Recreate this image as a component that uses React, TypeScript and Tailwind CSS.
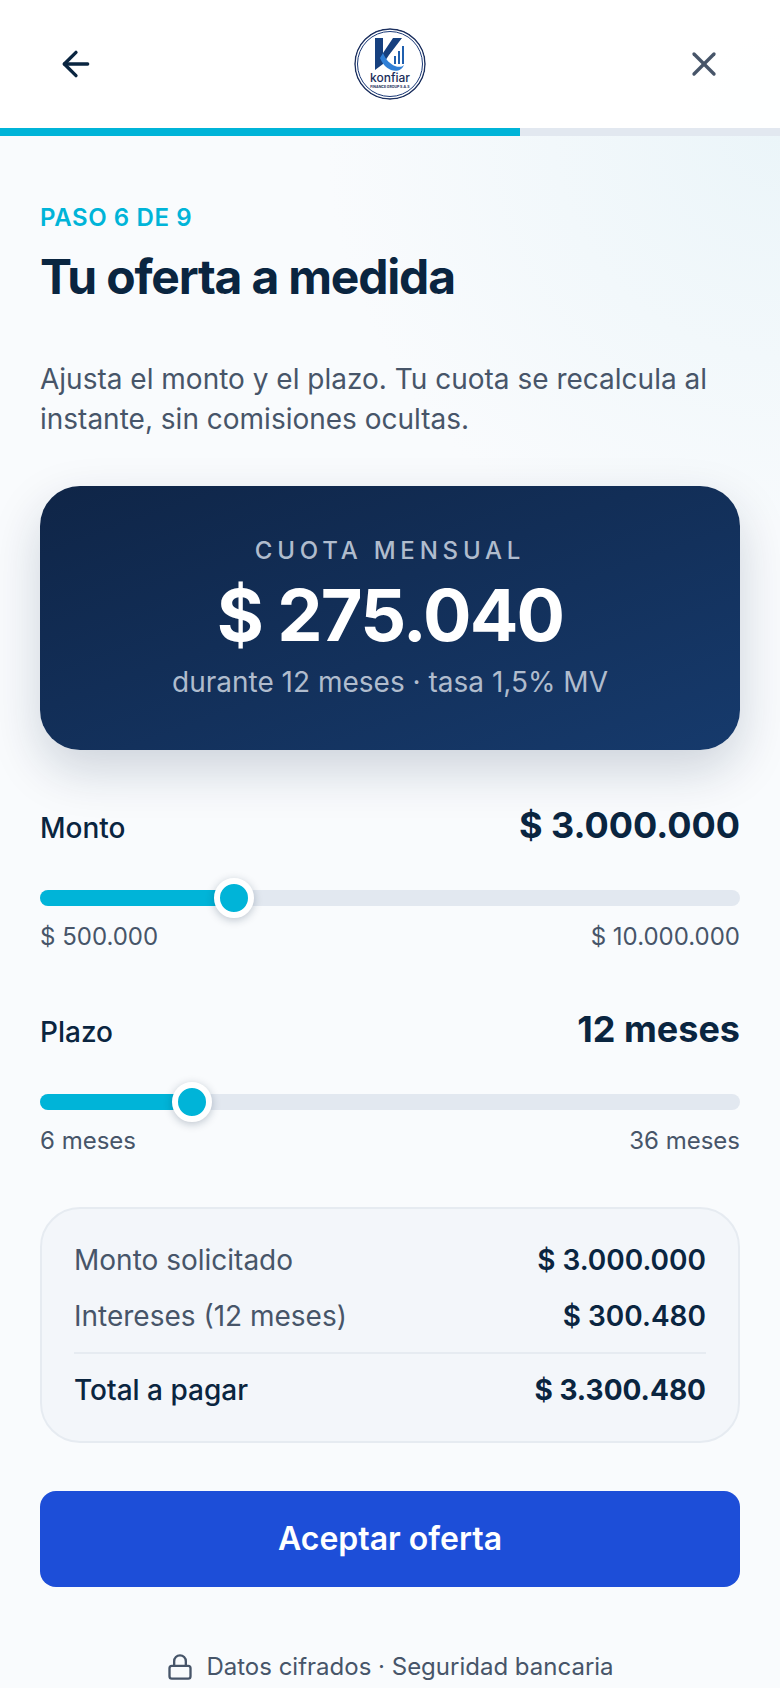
import { ArrowLeft, Lock, X } from "lucide-react";

function Logo() {
  return (
    <svg width="72" height="72" viewBox="0 0 72 72" className="rounded-full bg-white">
      <circle cx="36" cy="36" r="35" fill="none" stroke="#1b2f5e" strokeWidth="1.4" />
      <circle cx="36" cy="36" r="32.5" fill="none" stroke="#1b3a78" strokeWidth="1" />
      <path d="M21 10h8v15l10-15h9L35 27l-6 9-8 6z" fill="#16407f" />
      <path d="M29 25c3 7 7 11 12 13 4 1.500 7 1 9-1-2 5-7 7-13 5-5-2-9-7-11-12z" fill="#2f7fd6" />
      <path d="M40 28h2v8h-2zM44 23h2v13h-2zM48 18h2v18h-2z" fill="#1f5fae" />
      <text x="36" y="54" textAnchor="middle" fontSize="12" fontWeight="500" fill="#1a2d5a" fontFamily="Inter, sans-serif">
        konfiar
      </text>
      <text x="36" y="60" textAnchor="middle" fontSize="3.500" fontWeight="700" fill="#1a2d5a" fontFamily="Inter, sans-serif">
        FINANCE GROUP S.A.S
      </text>
    </svg>
  );
}

function Slider({
  label,
  value,
  min,
  max,
  minLabel,
  maxLabel,
  current,
}: {
  label: string;
  value: string;
  min: number;
  max: number;
  minLabel: string;
  maxLabel: string;
  current: number;
}) {
  // same thumb travel as a native range input: thumb stays inside the track
  const left = 20 + ((current - min) / (max - min)) * 660;
  return (
    <div>
      <div className="flex h-[44px] items-baseline justify-between">
        <span className="text-[28px] leading-[44px] font-medium text-[#0a2540]">{label}</span>
        <span className="text-[36px] leading-[44px] font-bold text-[#0a2540]">{value}</span>
      </div>
      <div className="relative mt-[43px] h-4 rounded-full bg-[#e2e8f0]">
        <div className="h-4 rounded-full bg-[#00b4d8]" style={{ width: left }} />
        <div
          className="absolute top-1/2 h-10 w-10 -translate-x-1/2 -translate-y-1/2 rounded-full border-[6px] border-white bg-[#00b4d8] shadow-[0_2px_8px_rgba(11,34,64,0.25)]"
          style={{ left }}
        />
      </div>
      <div className="mt-[15px] flex justify-between text-[24px] leading-[32px] text-[#475569]">
        <span>{minLabel}</span>
        <span>{maxLabel}</span>
      </div>
    </div>
  );
}

export default function App() {
  return (
    <div className="relative h-[1688px] w-[780px] overflow-hidden bg-[#f9fbfd] font-['Inter',sans-serif]">
      <div className="absolute top-0 right-0 h-[520px] w-[520px] bg-[radial-gradient(circle_at_100%_25%,#ebf5f9_0%,rgba(235,245,249,0)_70%)]" />

      <header className="relative flex h-[128px] items-center justify-between bg-white/95 px-[40px]">
        <ArrowLeft size={40} strokeWidth={2} className="ml-[16px] text-[#0a2540]" />
        <Logo />
        <X size={40} strokeWidth={2} className="mr-[16px] text-[#475569]" />
      </header>
      <div className="relative h-2 bg-[#e2e8f0]">
        <div className="h-2 w-[520px] bg-[#00b4d8]" />
      </div>

      <main className="relative px-[40px] pt-[66px]">
        <p className="text-[24px] leading-[32px] font-semibold tracking-[0.6px] text-[#00b4d8]">PASO 6 DE 9</p>
        <h1 className="mt-[13px] text-[48px] leading-[60px] font-bold tracking-[-1.2px] text-[#0a2540]">
          Tu oferta a medida
        </h1>
        <p className="mt-[52px] text-[28px] leading-[40px] text-[#475569]">
          Ajusta el monto y el plazo. Tu cuota se recalcula al instante, sin comisiones ocultas.
        </p>

        <section className="mt-[47px] flex h-[264px] flex-col items-center justify-center rounded-[40px] bg-[linear-gradient(160deg,#0f2547,#163a6c)] shadow-[0_20px_50px_rgba(11,34,64,0.18)]">
          <p className="text-[24px] leading-[32px] font-medium tracking-[4.8px] text-[#b0bccd]">CUOTA MENSUAL</p>
          <p className="mt-[8px] text-[72px] leading-[80px] font-bold tracking-[-1.8px] text-white">$ 275.040</p>
          <p className="mt-[7px] text-[28px] leading-[40px] text-[#b0bccd]">durante 12 meses · tasa 1,5% MV</p>
        </section>

        <div className="mt-[53px] flex flex-col gap-[54px]">
          <Slider label="Monto" value="$ 3.000.000" min={500000} max={10000000} current={3000000} minLabel="$ 500.000" maxLabel="$ 10.000.000" />
          <Slider label="Plazo" value="12 meses" min={6} max={36} current={12} minLabel="6 meses" maxLabel="36 meses" />
        </div>

        <section className="mt-[50px] rounded-[40px] border-2 border-[#e6ebf1] bg-[#f3f6fa] px-[32px] py-[31px] text-[28px] leading-[40px]">
          <div className="flex justify-between text-[#475569]">
            <span>Monto solicitado</span>
            <span className="font-semibold text-[#0a2540]">$ 3.000.000</span>
          </div>
          <div className="mt-[16px] flex justify-between text-[#475569]">
            <span>Intereses (12 meses)</span>
            <span className="font-semibold text-[#0a2540]">$ 300.480</span>
          </div>
          <div className="mt-[16px] flex justify-between border-t-2 border-[#e6ebf1] pt-[16px] font-medium text-[#0a2540]">
            <span>Total a pagar</span>
            <span className="font-bold">$ 3.300.480</span>
          </div>
        </section>

        <button className="mt-[48px] h-[96px] w-full rounded-[16px] bg-[#1d4ed8] text-[32px] font-semibold text-white">
          Aceptar oferta
        </button>

        <div className="mt-[64px] flex items-center justify-center gap-[12px] text-[24px] leading-[32px] text-[#475569]">
          <Lock size={28} strokeWidth={2} />
          <span>Datos cifrados · Seguridad bancaria</span>
        </div>
      </main>
    </div>
  );
}
